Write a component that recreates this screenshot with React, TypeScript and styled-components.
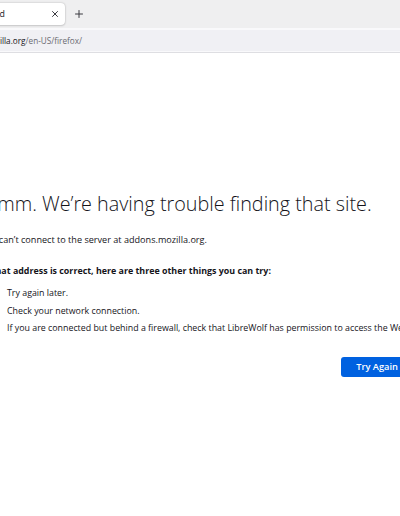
import React from "react";
import styled, { createGlobalStyle } from "styled-components";

const GlobalStyle = createGlobalStyle`
  html, body {
    margin: 0;
    padding: 0;
    background: #ffffff;
    overflow: hidden;
  }
  body {
    font-family: "Open Sans", "Noto Sans", "Liberation Sans", sans-serif;
    color: #15141a;
  }
`;

const Viewport = styled.div`
  width: 400px;
  height: 516px;
  overflow: hidden;
`;

// the screenshot is a crop of a wider window, so the browser frame starts off-screen
const Browser = styled.div`
  width: 620px;
  margin-left: -100px;
  display: flex;
  flex-direction: column;
`;

const TabStrip = styled.div`
  height: 28px;
  background: #efeff0;
  display: flex;
  align-items: center;
  padding-left: 4px;
`;

const Tab = styled.div`
  width: 161px;
  height: 22px;
  box-sizing: border-box;
  background: #ffffff;
  border-radius: 4px;
  box-shadow: 0 0 2px rgba(0, 0, 0, 0.25), 0 1px 2px rgba(0, 0, 0, 0.1);
  display: flex;
  align-items: center;
  padding: 0 2px 0 29px;
`;

const TabTitle = styled.span`
  flex: 1;
  font-size: 8.8px;
  white-space: nowrap;
  overflow: hidden;
  color: #15141a;
`;

const IconButton = styled.div<{ $size: number }>`
  width: ${(p) => p.$size}px;
  height: ${(p) => p.$size}px;
  display: flex;
  align-items: center;
  justify-content: center;
  color: #3a3a40;
`;

const NewTab = styled(IconButton)`
  margin-left: 4px;
`;

const Toolbar = styled.div`
  height: 25px;
  background: #f9f9fb;
  border-bottom: 1px solid #dedee2;
  display: flex;
  align-items: center;
  padding: 2px 4px 1px 4px;
  box-sizing: border-box;
`;

const UrlField = styled.div`
  flex: 1;
  height: 21px;
  background: #f0f0f4;
  border-radius: 4px;
  display: flex;
  align-items: center;
  padding-left: 49px;
  font-size: 8.2px;
  white-space: nowrap;
`;

const Domain = styled.span`
  color: #15141a;
`;

const UrlRest = styled.span`
  color: #6b6b72;
`;

const Page = styled.div`
  padding: 139px 0 0 83px;
`;

const Container = styled.div`
  width: 430px;
  display: flex;
  flex-direction: column;
`;

const Title = styled.h1`
  margin: 0;
  font-size: 19.8px;
  line-height: 24px;
  font-weight: 300;
  white-space: nowrap;
  color: #15141a;
`;

const Desc = styled.p`
  margin: 17px 0 0 0;
  font-size: 9.1px;
  line-height: 14px;
  white-space: nowrap;
`;

const Strong = styled.p`
  margin: 17px 0 0 0;
  font-size: 8.9px;
  line-height: 14px;
  font-weight: 700;
  white-space: nowrap;
`;

const List = styled.ul`
  margin: 7px 0 0 0;
  padding-left: 24px;
  list-style: none;
`;

const Item = styled.li`
  font-size: 8.85px;
  line-height: 17.5px;
  white-space: nowrap;
`;

const ButtonRow = styled.div`
  margin-top: 19px;
  display: flex;
  justify-content: flex-end;
`;

const PrimaryButton = styled.button`
  height: 20px;
  padding: 0 15px;
  border: none;
  border-radius: 3px;
  background: #0061e0;
  color: #ffffff;
  font-family: inherit;
  font-size: 9.3px;
  font-weight: 600;
  cursor: pointer;
`;

const CloseIcon = () => (
  <svg width="6" height="6" viewBox="0 0 6 6">
    <path d="M0.5 0.5 L5.5 5.5 M5.5 0.5 L0.5 5.5" stroke="currentColor" strokeWidth="1" strokeLinecap="round" />
  </svg>
);

const PlusIcon = () => (
  <svg width="8" height="8" viewBox="0 0 8 8">
    <path d="M4 0.5 V7.5 M0.5 4 H7.5" stroke="currentColor" strokeWidth="1" strokeLinecap="round" />
  </svg>
);

export default function App() {
  return (
    <Viewport>
      <GlobalStyle />
      <Browser>
        <TabStrip>
          <Tab>
            <TabTitle>Server Not Found</TabTitle>
            <IconButton $size={16}>
              <CloseIcon />
            </IconButton>
          </Tab>
          <NewTab $size={20}>
            <PlusIcon />
          </NewTab>
        </TabStrip>
        <Toolbar>
          <UrlField>
            <Domain>addons.mozilla.org</Domain>
            <UrlRest>/en-US/firefox/</UrlRest>
          </UrlField>
        </Toolbar>
        <Page>
          <Container>
            <Title>Hmm. We’re having trouble finding that site.</Title>
            <Desc>We can’t connect to the server at addons.mozilla.org.</Desc>
            <Strong>If that address is correct, here are three other things you can try:</Strong>
            <List>
              <Item>Try again later.</Item>
              <Item>Check your network connection.</Item>
              <Item>
                If you are connected but behind a firewall, check that LibreWolf has permission to access the Web.
              </Item>
            </List>
            <ButtonRow>
              <PrimaryButton>Try Again</PrimaryButton>
            </ButtonRow>
          </Container>
        </Page>
      </Browser>
    </Viewport>
  );
}
